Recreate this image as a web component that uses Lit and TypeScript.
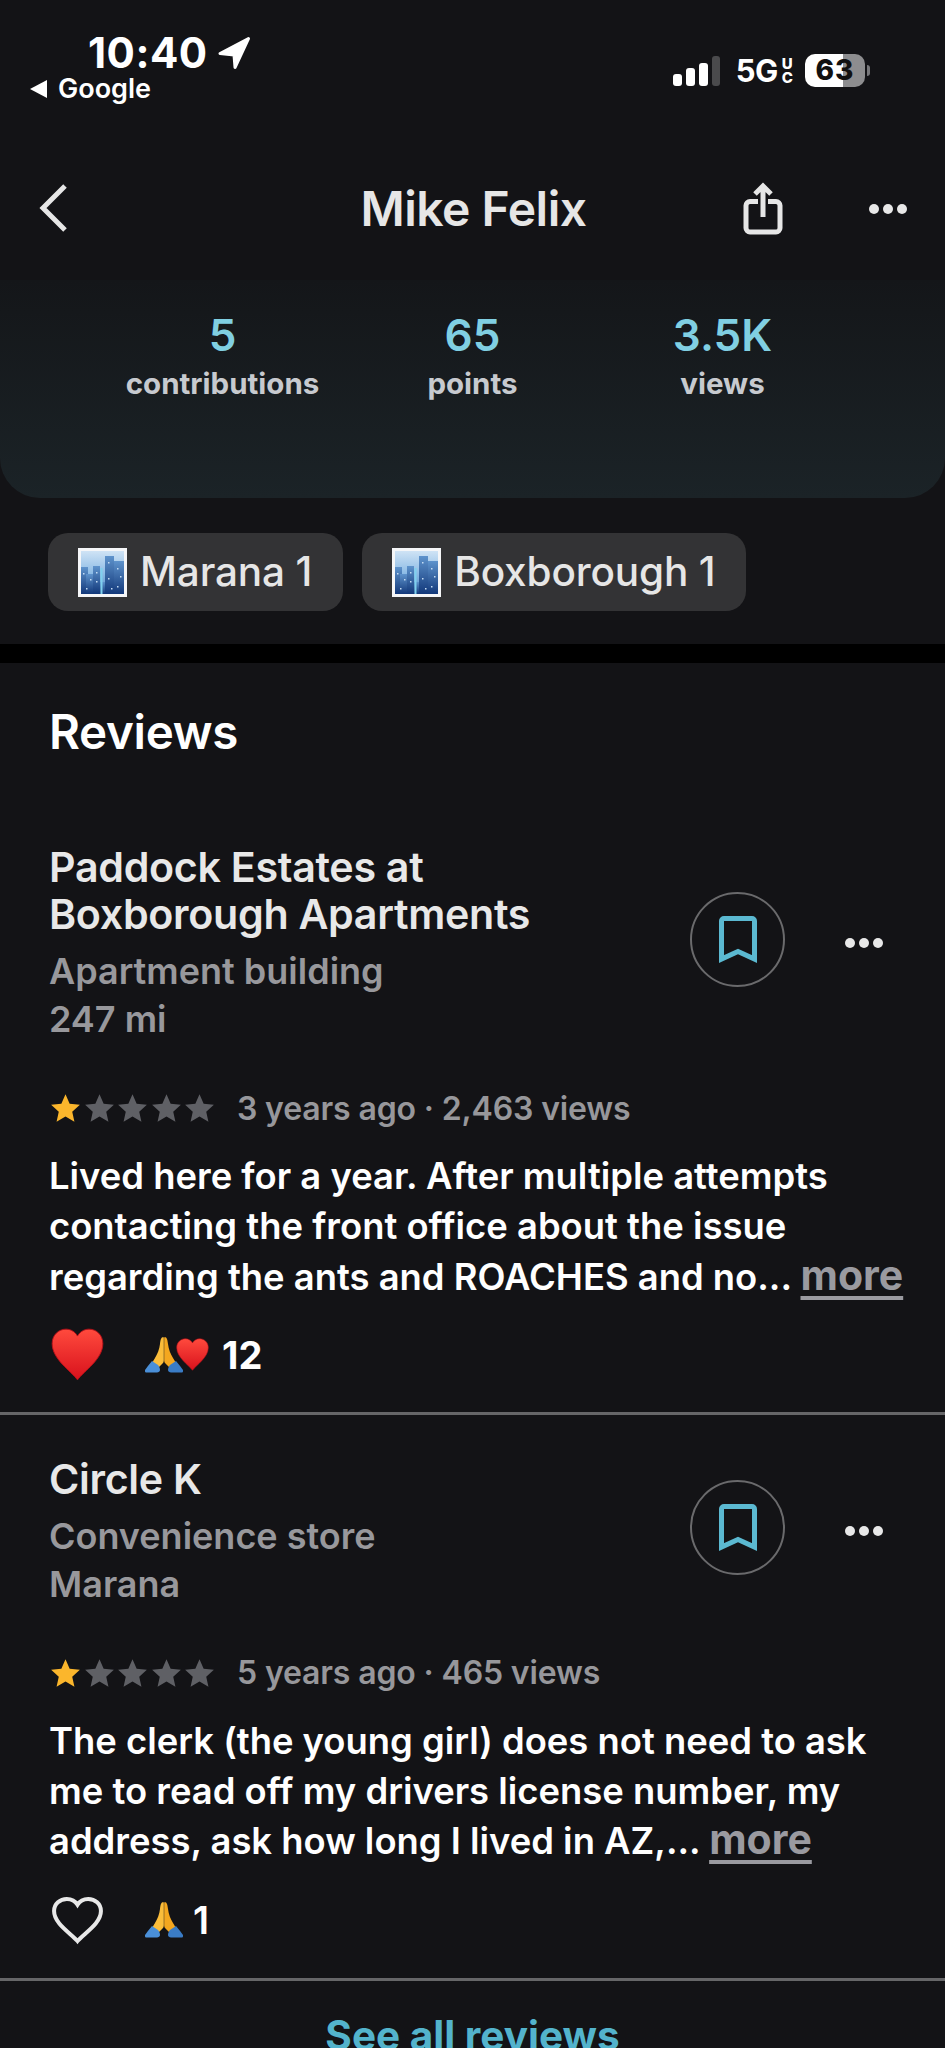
import { LitElement, html, css } from "lit";
import { customElement } from "lit/decorators.js";

const star = (fill: string) => html`<svg class="star" viewBox="0.8 1.5 22.400 21.200"><path fill=${fill} d="M12 1.500l3.200 7.300 7.900.8-5.900 5.300 1.700 7.800L12 18.600l-6.900 4.100 1.700-7.800L.9 9.600l7.900-.8z"/></svg>`;

const stars = html`<span class="stars">${star("#fbb62c")}${star("#5f6065")}${star("#5f6065")}${star("#5f6065")}${star("#5f6065")}</span>`;

const dots = html`<svg class="dots" viewBox="0 0 40 12"><circle cx="6" cy="6" r="5" fill="#e8e8e8"/><circle cx="20" cy="6" r="5" fill="#e8e8e8"/><circle cx="34" cy="6" r="5" fill="#e8e8e8"/></svg>`;

const bookmark = html`<div class="circle"><svg class="bm" viewBox="0 0 38 47"><path fill="none" stroke="#5bb9d1" stroke-width="5" d="M2.500 43V5A2.500 2.500 0 0 1 5 2.500h28A2.500 2.500 0 0 1 35.500 5v38L19 35.500z"/></svg></div>`;

const heartPath = "M12 23C9 19 1 14 1 7.300 1 3.500 3.800 1 7 1c2.200 0 4 1.200 5 3 1-1.800 2.800-3 5-3 3.200 0 6 2.500 6 6.300 0 6.700-8 11.700-11 15.700z";

const redHeart = (cls: string, id: string) => html`<svg class=${cls} viewBox="0.500 0.500 23 23"><defs><linearGradient id=${id} x1="0" y1="0" x2="0" y2="1"><stop offset="0" stop-color="#ff4a3d"/><stop offset="1" stop-color="#d8111c"/></linearGradient></defs><path fill="url(#${id})" stroke="#b80f18" stroke-width="0.400" d=${heartPath}/></svg>`;

const pray = html`<svg class="pray" viewBox="0 0 38 37"><path fill="#fbbd3a" d="M18.400 1C16 1 15.500 4 15 8c-.6 5-2.500 10-5 14-1 1.700-2 3.500-3 5l6 5 5-5c.5-.6.8-1.500.8-3V2z"/><path fill="#f4a71f" d="M19.600 1C22 1 22.500 4 23 8c.6 5 2.500 10 5 14 1 1.700 2 3.500 3 5l-6 5-5-5c-.5-.6-.8-1.500-.8-3V2z"/><path fill="#4a8fd8" d="M7 25c-2.500 3-5 6-7 9-.3 1 0 2.500 1 2.500h11c1.500 0 3-1 3-2.500 0-2-1-4-2-5z"/><path fill="#3a7cc6" d="M31 25c2.500 3 5 6 7 9 .3 1 0 2.500-1 2.500H26c-1.500 0-3-1-3-2.500 0-2 1-4 2-5z"/></svg>`;

const city = html`<svg class="city" viewBox="0 0 49 49"><defs><linearGradient id="sky" x1="0" y1="0" x2="0" y2="1"><stop offset="0" stop-color="#cfe3f5"/><stop offset="0.500" stop-color="#8fbde6"/><stop offset="1" stop-color="#4f8cc8"/></linearGradient><linearGradient id="bld" x1="0" y1="0" x2="0" y2="1"><stop offset="0" stop-color="#5e93cc"/><stop offset="1" stop-color="#12387a"/></linearGradient></defs><rect width="49" height="49" fill="#f5f6f8"/><rect x="3" y="3" width="43" height="43" fill="url(#sky)"/><g fill="url(#bld)"><rect x="3" y="19" width="7" height="27"/><rect x="8" y="26" width="8" height="20"/><rect x="15" y="18" width="7" height="28"/><rect x="27" y="8" width="9" height="38"/><rect x="36" y="13" width="10" height="33"/><rect x="22" y="34" width="5" height="12"/></g><rect x="22.500" y="20" width="2" height="26" fill="#7fd0ee"/><g fill="#c4dcf3"><rect x="5" y="25" width="1.500" height="1.500"/><rect x="12" y="31" width="1.500" height="1.500"/><rect x="18" y="24" width="1.500" height="1.500"/><rect x="18" y="33" width="1.500" height="1.500"/><rect x="30" y="14" width="1.500" height="1.500"/><rect x="39" y="20" width="1.500" height="1.500"/><rect x="42" y="28" width="1.500" height="1.500"/><rect x="30" y="30" width="1.500" height="1.500"/><rect x="39" y="38" width="1.500" height="1.500"/><rect x="8" y="40" width="1.500" height="1.500"/><rect x="33" y="40" width="1.500" height="1.500"/></g></svg>`;

@customElement("app-root")
export class AppRoot extends LitElement {
  static styles = css`
    :host { display: block; width: 945px; height: 2048px; overflow: hidden; background: #131316; color: #fff; font-family: Inter, "Liberation Sans", sans-serif; }
    .status { height: 136px; padding: 33px 0 0 30px; box-sizing: border-box; display: flex; justify-content: space-between; }
    .st-left { display: flex; flex-direction: column; }
    .time { display: flex; align-items: center; gap: 9px; margin-left: 58px; font-size: 42px; line-height: 40px; font-weight: 700; letter-spacing: 0.5px; height: 40px; }
    .time svg { width: 34px; height: 34px; }
    .google { display: flex; align-items: center; gap: 10px; font-size: 27px; line-height: 32px; font-weight: 600; margin-top: 0; }
    .google svg { width: 18px; height: 18px; }
    .st-right { display: flex; align-items: center; height: 75px; padding-right: 75px; }
    .signal { width: 47px; height: 30px; margin-right: 16px; }
    .fiveg { font-size: 31px; font-weight: 700; letter-spacing: -0.5px; line-height: 30px; }
    .uc { display: flex; flex-direction: column; font-size: 15px; font-weight: 800; line-height: 14px; margin: 0 12px 0 4px; }
    .bat { width: 60px; height: 33px; border-radius: 10px; overflow: hidden; background: linear-gradient(90deg, #fff 0 63%, #8d8d8f 63%); color: #111; font-size: 28px; font-weight: 800; text-align: center; line-height: 33px; letter-spacing: 1px; }
    .nub { width: 3px; height: 11px; border-radius: 0 3px 3px 0; background: #77777a; margin-left: 2px; }
    .nav { height: 144px; box-sizing: border-box; display: grid; grid-template-columns: 1fr 1fr 1fr; align-items: center; padding: 0 37px 0 39px; }
    .nav-left { display: flex; }
    .back { width: 28px; height: 48px; }
    .title { font-size: 48px; font-weight: 600; color: #e6e6e6; text-align: center; letter-spacing: -0.5px; white-space: nowrap; }
    .nav-right { display: flex; justify-content: flex-end; align-items: center; gap: 85px; }
    .nav-right .dots { margin-top: 2px; }
    .share { width: 40px; height: 54px; }
    .dots { width: 40px; height: 12px; display: block; }
    .panel { height: 218px; box-sizing: border-box; padding-top: 30px; border-radius: 0 0 40px 40px; background: linear-gradient(180deg, #141619 0%, #1b2327 100%); display: grid; grid-template-columns: repeat(3, 250px); justify-content: center; }
    .stat { text-align: center; }
    .num { font-size: 44px; line-height: 50px; font-weight: 600; color: #80cfe2; }
    .lab { font-size: 29.500px; line-height: 34px; font-weight: 700; color: #c7cacf; margin-top: 6px; }
    .chips { display: flex; gap: 19px; padding: 35px 48px 33px; }
    .chip { display: flex; align-items: center; gap: 13px; height: 78px; padding: 0 31px 0 30px; border-radius: 20px; background: #333335; font-size: 40.500px; line-height: 76px; font-weight: 500; letter-spacing: -0.15px; color: #e6e6e6; white-space: nowrap; }
    .city { width: 49px; height: 49px; flex: none; }
    .band { height: 19px; background: #000; }
    h2 { margin: 0; padding: 41px 49px 0; font-size: 47.500px; line-height: 56px; font-weight: 600; color: #fff; letter-spacing: -0.3px; }
    .review { padding: 0 0 0 49px; }
    .first { padding-top: 84px; }
    .second { padding-top: 41px; }
    .head { display: flex; align-items: center; padding-right: 61px; }
    .head .dots { margin-bottom: 2px; }
    .info { flex: 1; }
    .name { font-size: 41.200px; line-height: 47px; font-weight: 600; color: #e8e8e8; letter-spacing: -0.3px; }
    .sub { font-size: 36px; line-height: 48px; font-weight: 600; color: #98989c; margin-top: 9px; }
    .sub + .sub { margin-top: 0; }
    .circle { width: 95px; height: 95px; box-sizing: border-box; border: 2px solid #6a6a6c; border-radius: 50%; display: flex; align-items: center; justify-content: center; margin: 0 59px 8px 0; }
    .bm { width: 38px; height: 47px; overflow: visible; }
    .meta { display: flex; align-items: center; margin-top: 45px; height: 40px; }
    .stars { display: flex; gap: 4.500px; padding-left: 2px; margin-right: 23px; }
    .star { width: 29px; height: 28px; flex: none; }
    .when { font-size: 32px; font-weight: 600; color: #97979b; letter-spacing: -0.15px; }
    .body { margin: 23px 0 0; font-size: 36.400px; line-height: 50.300px; font-weight: 600; color: #fff; white-space: nowrap; }
    .more { color: #9a9aa0; font-size: 41px; line-height: 40px; font-weight: 700; text-decoration: underline; text-decoration-thickness: 4px; text-underline-offset: 6px; }
    .react { display: flex; align-items: center; margin: 26px 0 0; height: 54px; }
    .big { width: 53px; height: 53px; margin: 0 41px 0 2px; }
    .outline { width: 49px; height: 44px; margin: 0 43px 0 4px; overflow: visible; }
    .pray { width: 38px; height: 37px; }
    .mini { width: 35px; height: 33px; margin-left: -8px; }
    .count { font-size: 38px; font-weight: 700; margin-left: 12px; }
    .count.solo { margin-left: 10px; font-weight: 600; }
    .rule { height: 3px; background: #666668; }
    .r1 { margin-top: 30px; }
    .r2 { margin-top: 31px; }
    .see { text-align: center; color: #53b3cc; font-size: 40.500px; line-height: 46px; font-weight: 700; margin-top: 32.500px; }
  `;

  render() {
    return html`
      <div class="status">
        <div class="st-left">
          <div class="time">10:40<svg viewBox="0 0 34 34"><path fill="#fff" stroke="#fff" stroke-width="3" stroke-linejoin="round" d="M31.500 2.500L3 17.500l14 1.500 1 12.500z"/></svg></div>
          <div class="google"><svg viewBox="0 0 18 18"><path fill="#fff" d="M17 0v18L0 9z"/></svg>Google</div>
        </div>
        <div class="st-right">
          <svg class="signal" viewBox="0 0 47 30"><rect x="0" y="18" width="9" height="12" rx="3" fill="#fff"/><rect x="13" y="12" width="9" height="18" rx="3" fill="#fff"/><rect x="26" y="7" width="9" height="23" rx="3" fill="#fff"/><rect x="39" y="0" width="8" height="30" rx="3" fill="#4a4a4c"/></svg>
          <span class="fiveg">5G</span>
          <span class="uc"><span>U</span><span>C</span></span>
          <div class="bat">63</div>
          <div class="nub"></div>
        </div>
      </div>
      <div class="nav">
        <div class="nav-left"><svg class="back" viewBox="0 0 28 48"><path fill="none" stroke="#e6e6e6" stroke-width="5" d="M26 2L4 24l22 22"/></svg></div>
        <div class="title">Mike Felix</div>
        <div class="nav-right">
          <svg class="share" viewBox="0 0 40 54"><path fill="none" stroke="#e6e6e6" stroke-width="5" stroke-linejoin="round" d="M15 20.500H7a4 4 0 0 0-4 4V47a4 4 0 0 0 4 4h26a4 4 0 0 0 4-4V24.500a4 4 0 0 0-4-4h-8"/><path fill="none" stroke="#e6e6e6" stroke-width="5" d="M20 36V5M12 13l8-8 8 8"/></svg>
          ${dots}
        </div>
      </div>
      <div class="panel">
        <div class="stat"><div class="num">5</div><div class="lab">contributions</div></div>
        <div class="stat"><div class="num">65</div><div class="lab">points</div></div>
        <div class="stat"><div class="num">3.5K</div><div class="lab">views</div></div>
      </div>
      <div class="chips">
        <div class="chip">${city}Marana 1</div>
        <div class="chip">${city}Boxborough 1</div>
      </div>
      <div class="band"></div>
      <h2>Reviews</h2>
      <section class="review first">
        <div class="head">
          <div class="info">
            <div class="name">Paddock Estates at<br />Boxborough Apartments</div>
            <div class="sub">Apartment building</div>
            <div class="sub">247 mi</div>
          </div>
          ${bookmark}${dots}
        </div>
        <div class="meta">${stars}<span class="when">3 years ago · 2,463 views</span></div>
        <p class="body">Lived here for a year. After multiple attempts<br />contacting the front office about the issue<br />regarding the ants and ROACHES and no... <span class="more">more</span></p>
        <div class="react">${redHeart("big", "h1")}${pray}${redHeart("mini", "h2")}<span class="count">12</span></div>
      </section>
      <div class="rule r1"></div>
      <section class="review second">
        <div class="head">
          <div class="info">
            <div class="name">Circle K</div>
            <div class="sub">Convenience store</div>
            <div class="sub">Marana</div>
          </div>
          ${bookmark}${dots}
        </div>
        <div class="meta">${stars}<span class="when">5 years ago · 465 views</span></div>
        <p class="body">The clerk (the young girl) does not need to ask<br />me to read off my drivers license number, my<br />address, ask how long I lived in AZ,... <span class="more">more</span></p>
        <div class="react"><svg class="outline" viewBox="0.500 0.500 23 23" preserveAspectRatio="none"><path fill="none" stroke="#e8e8e8" stroke-width="4" vector-effect="non-scaling-stroke" d=${heartPath}/></svg>${pray}<span class="count solo">1</span></div>
      </section>
      <div class="rule r2"></div>
      <div class="see">See all reviews</div>
    `;
  }
}
